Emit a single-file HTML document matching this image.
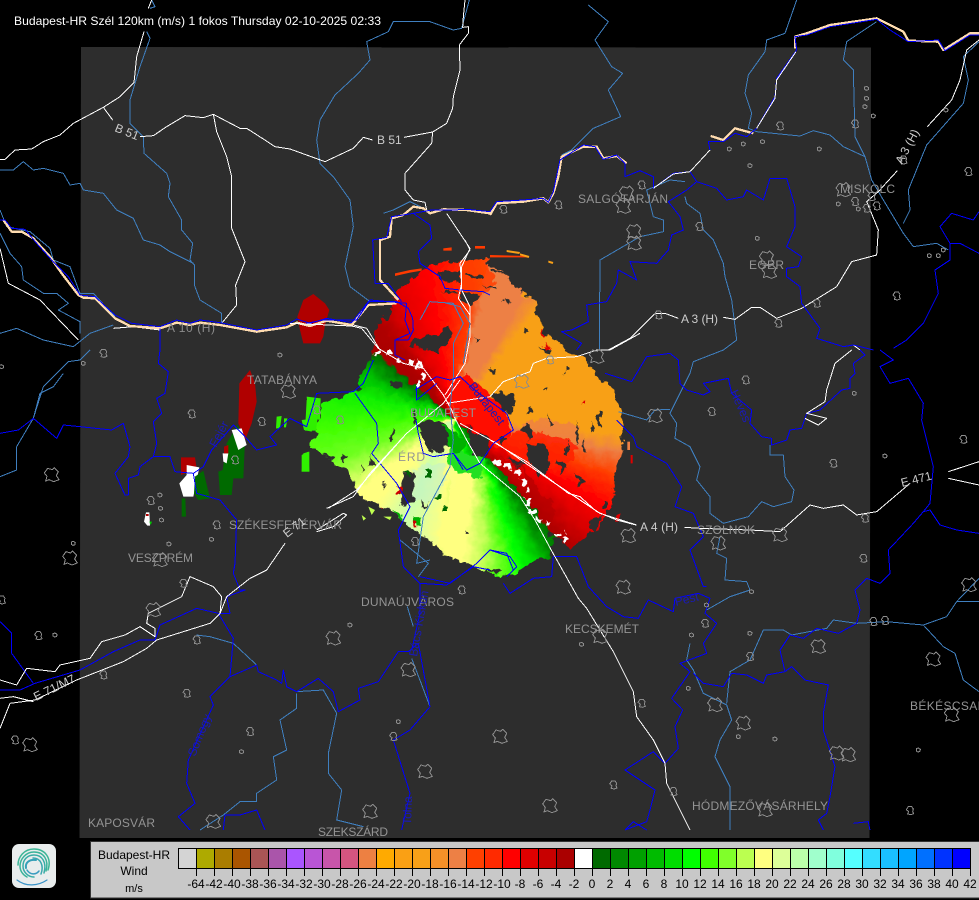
<!DOCTYPE html>
<html><head><meta charset="utf-8"><title>Budapest-HR</title>
<style>
html,body{margin:0;padding:0;background:#000;width:979px;height:900px;overflow:hidden}
#w{position:absolute;left:290px;top:240px;width:1050px;height:1050px;transform:scale(.33333);transform-origin:0 0;filter:url(#rough)}
#r{position:absolute;left:0;top:0;width:1050px;height:1050px;
clip-path:polygon(250px 340px,255px 270px,290px 230px,310px 180px,335px 140px,380px 110px,420px 75px,500px 65px,600px 55px,590px 80px,640px 95px,670px 130px,700px 160px,735px 190px,745px 235px,760px 280px,800px 300px,840px 340px,905px 370px,920px 410px,975px 450px,995px 530px,1000px 620px,990px 650px,975px 700px,970px 790px,930px 860px,880px 900px,840px 925px,810px 900px,785px 900px,785px 950px,740px 960px,680px 1000px,620px 1005px,580px 990px,530px 970px,480px 960px,400px 890px,350px 860px,330px 830px,260px 790px,220px 770px,190px 740px,180px 690px,130px 670px,110px 650px,60px 620px,75px 590px,100px 490px,200px 450px,215px 400px,240px 360px);
background:conic-gradient(from 0deg at 490px 530px,#ff2000 0deg,#ff3a00 8deg,#ed8045 14deg,#ed8045 30deg,#f8a018 38deg,#f8a018 96deg,#ed8045 102deg,#ff4000 110deg,#ff0000 120deg,#d80000 130deg,#a80000 139.5deg,#006a00 140deg,#008800 145deg,#00c000 153deg,#00f000 160deg,#60ff10 167deg,#bbff50 175deg,#ffff80 186deg,#ddffa0 197deg,#ccffaa 205deg,#ffff80 222deg,#ffff80 232deg,#bbff50 240deg,#70ff20 250deg,#40ff00 265deg,#10f000 282deg,#00c000 295deg,#007000 308deg,#a80000 310deg,#b00000 322deg,#e00000 335deg,#ff0000 350deg,#ff2000 360deg)}
#se{position:absolute;left:0;top:0;width:1050px;height:1050px;
clip-path:polygon(470px 640px,590px 645px,700px 770px,790px 880px,790px 960px,680px 1010px,480px 970px,440px 900px,480px 760px);
background:conic-gradient(from 0deg at 560px 600px,transparent 0deg,transparent 139.5deg,#006a00 140deg,#008800 146deg,#00c000 152deg,#00ff00 160deg,#50ff10 167deg,#bbff50 176deg,#ffff80 186deg,#ffff80 205deg,#eeffa0 260deg,transparent 260.5deg)}
svg{position:absolute;left:0;top:0}
text{font-family:"Liberation Sans",sans-serif}
.c{fill:#949494;font-size:12px}
.rd{fill:#ccc;font-size:12px}
.cn{fill:#1a1ab8;font-size:12px}
.l text{fill:#000;font-size:12px}
</style></head><body>
<svg width="979" height="900" viewBox="0 0 979 900">
<defs>
<filter id="rough" x="-5%" y="-5%" width="110%" height="110%"><feTurbulence type="fractalNoise" baseFrequency="0.035" numOctaves="3" seed="7" result="n"/><feDisplacementMap in="SourceGraphic" in2="n" scale="34" xChannelSelector="R" yChannelSelector="G"/></filter>
<path id="m" d="M-11,-3L-5,-12 5,-12 10,-5 8,2 11,9 2,12 -7,10 -4,3Z"/>
<path id="s" d="M-6,-4L0,-6 6,-2 5,4 -1,6 -6,3Z"/>
<path id="l" d="M-22,-6L-12,-20 2,-16 8,-22 20,-10 14,2 22,14 6,20 -8,14 -18,18 -14,4Z"/>
</defs>
<polygon points="81,47 871,47.5 869.5,838 79.5,838" fill="#2d2d2d"/>
</svg>
<div id="w"><div id="r"><div id="se"></div>
<svg width="1050" height="1050" viewBox="0 0 1050 1050">
<path fill="#ff4000" d="M510,65L600,55 590,90 620,130 570,170 520,170Z" opacity=".85"/>
<path fill="#ff1000" d="M480,430L530,400 590,460 640,500 665,570 640,625 560,570 500,540Z"/>
<path fill="#ff2000" d="M620,610L700,565 800,585 860,610 850,660 760,690 660,650Z" opacity=".85"/>
<path fill="#ed8045" d="M690,545L780,540 870,560 860,600 780,580 700,565Z" opacity=".8"/>
<path fill="#20e020" d="M480,625L590,650 570,720 500,690 470,660Z"/>
<path fill="#bff0d0" d="M375,680L465,665 470,720 420,790 365,780Z" opacity=".5"/>
<path fill="#2d2d2d" d="M420,290L480,265 490,300 440,335 400,330 360,310 380,290ZM510,150L570,170 540,200 510,175ZM440,95L510,95 510,125 455,120ZM530,100L580,108 575,116 530,110ZM600,90L650,100 650,108 600,98ZM380,550L440,540 470,560 482,620 440,640 408,610ZM530,560L600,600 590,640 550,650ZM640,450L680,480 670,520 640,520 610,470ZM700,545L730,570 720,600 690,570ZM710,610L770,620 780,680 750,720 715,660ZM830,600L840,650 825,650ZM860,540L870,600 860,610ZM925,510L935,510 930,560 920,560ZM940,780L955,780 950,810 935,810ZM345,700L375,700 370,790 340,800 325,750ZM310,565L318,570 305,600 298,595ZM305,425L335,425 335,437 305,437ZM600,380L620,395 610,405ZM550,290L565,300 560,312ZM700,270L712,270 712,280 700,280ZM750,320L790,330 780,345ZM820,380L840,390 825,400ZM720,510L730,525 710,520ZM590,990L640,985 620,1000ZM150,640L170,640 160,670ZM100,640L130,650 120,670ZM215,670L225,690 215,700ZM530,870L540,880 525,880ZM780,870L800,880 770,900ZM650,650L700,670 690,690ZM400,800L420,790 400,810ZM400,590L440,590 420,640ZM460,150L500,155 490,162ZM570,130L620,140 615,148ZM640,180L660,185 655,195ZM590,385L610,388 605,395ZM760,440L775,440 770,450ZM780,520L790,560 782,565ZM905,540L912,575 905,580ZM880,590L888,640 878,640ZM800,660L830,680 810,700ZM860,700L885,720 860,740ZM900,840L940,830 910,880ZM620,590L650,600 640,615ZM240,640L250,680 238,680ZM280,730L290,740 278,745ZM370,500L385,540 372,550ZM395,780L405,800 392,810Z"/>
<path fill="#ff3a00" d="M520,55L600,45 610,52 520,62ZM640,85L680,95 678,102 640,92Z"/>
<path fill="#f8a018" d="M700,160L720,165 720,175 700,172Z"/>
<path fill="#e00000" d="M750,265L770,275 755,285ZM765,310L790,325 775,330ZM820,285L840,295 830,305ZM880,480L890,490 880,500Z"/>
<path fill="#b00000" d="M620,650L700,690 720,790 760,850 830,915 790,870 790,800 740,740 700,680Z" opacity=".6"/>
<path fill="#006a00" d="M405,690L420,690 420,720 405,715ZM437,762L452,762 450,782 437,780ZM458,800L472,800 472,816 458,816ZM345,700L358,700 358,716 345,716Z"/>
<path fill="#00b000" d="M370,830L395,830 392,855 368,855ZM310,810L340,830 325,845ZM460,560L540,600 510,640 470,620Z"/>
<path fill="#c00" d="M320,735L332,735 332,755 320,755ZM265,795L285,800 275,810ZM370,845L382,848 378,862 368,860Z"/>
<g fill="none" stroke="#fff" stroke-width="12" stroke-dasharray="22 12">
<path d="M255,342L300,335 340,360 395,378 395,420 372,450"/>
<path d="M610,660L680,692 712,740 712,800 735,835 785,855"/>
<path d="M795,888L830,878M820,905L830,900"/>
</g>
</svg></div></div>
<svg width="979" height="900" viewBox="0 0 979 900">
<g transform="translate(290,240) scale(.33333)">
<path fill="#ff3a00" d="M600,45L715,48 715,52 600,52ZM460,25L485,22 485,32 460,32ZM555,18L585,18 585,26 555,26ZM315,100L360,90 395,85 395,92 360,98 315,108Z"/>
<path fill="#f8a018" d="M650,30L690,36 688,42 650,36ZM690,40L718,48 716,54 690,46ZM775,62L790,66 788,72 775,68Z"/>
<path fill="#e00000" d="M980,825L992,820 985,845 975,845ZM1022,645L1028,645 1028,670 1022,670Z"/>
<path fill="#ed8045" d="M1012,605L1020,605 1020,630 1012,630Z"/>
<path fill="#30f000" d="M50,480L90,478 78,572 45,572ZM40,640L58,635 58,695 35,695Z"/>
<path fill="#c0ff50" d="M235,800L255,810 245,825ZM280,830L305,830 300,840ZM215,825L228,835 220,842Z"/>
</g>
<g transform="translate(0,350) scale(.33333)">
<path fill="#b00000" d="M718,100L750,60 765,100 770,155 755,220 735,270 715,220Z"/>
<path fill="#006a00" d="M680,280L712,225 735,270 730,385 700,385 695,435 660,435 655,365 668,360Z"/>
<path fill="#fff" d="M695,240L725,235 740,285 715,300ZM668,310L685,310 680,340 670,335Z"/>
<path fill="#b00000" d="M672,290L685,285 685,310 672,310ZM543,322L585,322 590,355 543,375Z"/>
<path fill="#fff" d="M560,345L598,352 580,440 550,440 538,400 560,375Z"/>
<path fill="#006a00" d="M585,380L610,362 630,445 595,450 582,430ZM545,445L556,445 558,500 545,500Z"/>
<path fill="#fff" d="M438,487L448,487 450,527 442,527 432,515Z"/><path fill="#0c0" d="M448,515L456,515 452,525Z"/>
<path fill="#b00000" d="M438,492L446,492 446,498 438,498Z"/>
<path fill="#30f000" d="M830,200L845,198 840,235 828,235ZM852,205L862,205 858,232 852,232ZM905,210L945,205 935,245 912,240ZM920,140L962,145 960,210 940,205 925,190ZM905,315L925,305 928,365 905,365Z"/>
</g>
<g transform="scale(.33333)"><path fill="#b00000" d="M892,950L910,900 940,882 975,910 988,930 975,975 970,1010 960,1030 910,1030 900,990Z"/></g>

<g fill="none" stroke-linejoin="round" shape-rendering="crispEdges">
<!-- zoom 4: top-left -->
<g transform="scale(.33333)" stroke-width="3">
<g stroke="#3f7fbf">
<path d="M450,25L465,20 455,0M440,95L450,115 420,200 390,300 390,370 430,410 432,460 500,520 510,550 505,590 545,660 545,690 578,730 570,780 583,795 583,855 600,900 665,940 665,970"/>
<path d="M1408,0L1385,85 1360,90 1290,65 1180,65 1165,95 1100,125 1110,180 1075,220 1005,285 960,360 950,420 960,490 1000,530 1050,600 1060,680 1035,800 1050,860 1110,905"/>
<path d="M0,510L40,510 70,485 100,510 130,505 190,520 210,555 240,550 250,570 310,580 350,630 400,655 430,720 480,735 510,755 580,790"/>
<path d="M0,630L20,680 90,695 150,745 160,780 210,800 240,880 280,880 345,950"/>
<path d="M0,700L30,760 65,800 70,840 130,880 170,880 205,910 175,930 240,965 240,1000M0,1000L50,985 130,1020 220,1040 270,1000 340,975M1150,640L1180,630 1230,605 1290,635"/>
</g>
<g stroke="#fff">
<path d="M445,25L455,0M432,95L410,170 402,248 360,290 310,322 220,370 180,405 130,425 95,447 45,450 15,478 0,478M310,322L338,360"/>
<path d="M420,410L460,407 500,380 555,347 610,353 640,343 720,385 740,385 790,417 825,440 870,447 975,485 1060,445 1090,412 1118,420M1212,412L1298,396 1340,370 1358,325 1360,290 1380,210 1378,135 1405,100 1405,80 1388,82 1390,50 1395,0"/>
<path d="M640,343L650,395 680,470 695,530 695,685 735,785 707,855 710,915 665,970"/>
<path d="M1298,396L1295,430 1215,520 1215,570 1240,600 1275,607 1280,630M1340,640L1410,745 1385,800 1385,870 1410,920 1410,950"/>
<path d="M0,745L25,850 120,900 235,1020M340,985L400,980 480,990M1060,975L1100,985 1140,1050"/>
</g>
<path stroke="#ffdcb0" stroke-width="7" d="M10,660L35,695 65,695 100,715 150,770 185,820 235,885 250,893 285,895 345,955 390,978 480,985 530,968 570,975 600,968 660,975 770,995 860,982 890,968 930,978 980,962 1055,975 1105,915 1190,910M1195,900L1140,840 1140,720 1170,710 1175,655 1210,645 1240,620 1270,625 1290,640 1330,628 1400,630 1470,640"/>
<path stroke="#0000ff" d="M0,660L15,660 35,685 75,688 110,730 155,780 205,830 240,885 285,890 345,945 395,970 480,980 530,960 570,970 600,960 660,968 770,990 860,975 890,957 930,970 980,955 1055,968 1105,905 1190,905 1225,925 1238,955 1240,990 1225,1020 1185,1020 1185,1050M480,985V1050M1205,905L1165,850 1125,850 1118,720 1160,712 1175,650 1210,645 1240,640 1290,675 1295,715 1255,755 1260,790 1320,830 1335,865 1380,870 1450,875 1470,885M1240,640L1295,630 1360,630 1400,628 1470,635"/>
</g>
<!-- zoom 5: top-right -->
<g transform="translate(490,0) scale(.33333)" stroke-width="3">
<g stroke="#3f7fbf">
<path d="M295,15L355,65 315,120 365,200 398,220 355,270 392,350 310,385 245,450 215,465"/>
<path d="M920,0L885,100 830,120 825,155 775,225 765,280 785,340 775,385 800,395 930,408 970,392 1020,405 1060,440 1125,470 1145,540 1180,600 1240,700 1270,740 1340,730 1375,750"/>
<path d="M1240,670L1260,630 1255,570 1310,435 1420,310 1435,240 1420,170 1467,125M1160,65L1070,125 1060,180 1090,210 1095,410 1125,470"/>
<path d="M585,590L590,610 630,640 640,690 670,720 700,790 705,830 725,900 740,1020 700,1050M585,545L540,540 470,570 490,650 520,660 520,695 450,710 330,780 328,1050"/>
</g>
<g stroke="#fff">
<path d="M355,1050L420,1015 495,940 525,940 565,955M700,952L735,958 785,922 810,922 860,955 935,925 1040,860 1085,785 1160,765 1165,690 1130,605 1165,575 1222,512M1312,380L1385,300 1410,240 1430,150 1467,120M1090,1035L1110,1050"/>
</g>
<path stroke="#ffdcb0" stroke-width="7" d="M0,645L20,610 100,605 160,595 175,607 190,580 205,530 215,470 280,440 320,440 340,475 380,468 410,490M662,408L700,420 735,385 790,400M915,145L915,110 950,100 1020,75 1160,55 1240,95 1255,122 1345,125 1360,150 1440,100 1467,100"/>
<path stroke="#0000ff" d="M0,635L20,605 100,600 160,595 175,607 190,575 210,480 280,435 315,440 340,478 380,465 405,490 405,530 450,512 490,530 490,565 550,520 600,515 660,450 655,425 700,425 735,400 770,410 800,385 855,290 860,235 920,150 915,110 950,105 1020,80 1160,58 1200,90 1255,125 1345,120 1365,152 1440,105 1467,105"/>
<path stroke="#fff" d="M800,385L855,295 860,240 918,155M490,565L550,522 600,515 660,450"/>
<path stroke="#0000ff" d="M600,515L620,545 590,570 535,605 570,650 580,690 545,705 535,750 500,790 420,785 440,840 385,810 380,850 350,905 290,915 295,965 245,990 215,995 275,1030 260,1050M620,545L680,565 710,600 760,590 770,570 820,600 840,535 890,535 915,620 915,680 890,740 935,770 925,800 890,805 890,830 930,860 935,910 990,985 980,1015 1060,1040 1090,1035 1150,1050"/>
<path stroke="#0000ff" d="M1467,635L1450,660 1385,640 1350,680 1380,730 1380,780 1335,810 1345,880 1300,970 1250,1020 1210,1045M1380,730L1410,730 1467,760"/>
</g>
<!-- zoom 6: bottom-left -->
<g transform="translate(0,350) scale(.33333)" stroke-width="3">
<g stroke="#3f7fbf">
<path d="M270,0L240,30 205,35 130,110 100,205 50,290 50,360 0,380M190,70L160,110 120,130 100,205"/>
<path d="M590,855L630,860 700,880 770,945M890,1030V1075L840,1110 860,1200 820,1220 830,1290 770,1330 770,1355 720,1355 670,1395 600,1440"/>
<path d="M890,1025L970,1020 1010,1090 985,1210 985,1270 1025,1320 1010,1410 1090,1430M1200,570L1285,640 1255,680M1235,925L1290,1070M1222,770L1240,830"/>
</g>
<g stroke="#0000ff">
<path d="M480,0L475,40 505,65 495,130 470,145 485,190 460,215 470,280 460,320 420,350 415,375 385,385 385,435 375,435 345,370 385,320 390,290 370,220 335,240 240,230 190,225 170,265 100,205 55,240 0,250"/>
<path d="M460,320L510,320 525,365 580,370 610,350 635,300 700,225 735,260 770,300 830,285 810,260 870,205 920,230 950,130 1060,125 1090,100 1120,30"/>
<path d="M580,370L590,430 660,450 710,510 705,640 700,670 720,720 735,720 680,740 690,790 655,790 700,865 690,980 630,1040 640,1065 565,1230 560,1300 585,1360 535,1400 570,1440"/>
<path d="M655,790L590,775 480,825 465,870 420,870 340,905 240,960 105,1000 60,1020 0,1020"/>
<path d="M690,980L770,945 775,965 830,990 845,1000 850,960 860,1010 890,1025 955,985 1000,1025 1015,1085 1080,1050 1075,1015 1135,995 1195,905 1225,905"/>
<path d="M1225,905L1255,880 1290,1070 1230,1140 1180,1170 1230,1330 1205,1440M1195,540L1210,650 1260,700 1340,705 1420,650 1470,660M1260,700V790L1235,900M0,815L35,850 35,910 100,1000M670,1440L675,1395 720,1395 770,1380 795,1440"/>
<path d="M1065,130L1130,220 1135,280 1115,310 1190,400 1230,470 1205,520 1195,540"/>
</g>
<g stroke="#fff">
<path d="M855,580L800,660 750,685 680,740 660,790 630,820 470,870 440,895 370,935 230,990 105,1050 30,1060 0,1135M0,1045L40,1040 100,1055"/>
<path d="M0,990L50,1005 80,955 165,965 180,945 270,925 305,875 375,855 420,830 465,860 465,835 440,820 445,790 545,740 570,680 640,710 665,740 660,790"/>
<path d="M1220,250L1070,420 985,475M950,540L1030,490 1040,495 1000,530 950,545"/>
</g>
</g>
<!-- zoom 7: bottom-right -->
<g transform="translate(490,350) scale(.33333)" stroke-width="3">
<g stroke="#3f7fbf">
<path d="M700,0L610,35 600,70 540,190 560,220 555,265 600,290 630,350 620,390 660,440 660,490 700,520 775,500 815,455 850,470 905,455 912,420 885,380 880,315 840,315 840,285"/>
<path d="M385,185L470,210 495,180 540,178M690,560L680,610 710,625 705,690 770,695 780,720 720,740 650,780"/>
<path d="M600,880L590,930 610,960 640,1030 710,1065 725,1110 690,1170 675,1220 720,1310 720,1440"/>
<path d="M710,1060L720,965 780,930 820,840 880,840 905,855 1010,835 1030,810 1100,820 1190,815 1300,825 1360,890 1395,910 1420,990 1467,1025M1300,825L1370,800 1400,755 1467,755M1400,755L1467,685"/>
</g>
<g stroke="#0000ff">
<path d="M190,620L260,620 295,710 350,770 400,800 445,805 475,750 550,785 555,745 625,730 660,745 645,790 680,820 640,880 650,910 610,925 570,940 600,965 545,1045 578,1080 555,1130 565,1195 525,1240 490,1205 405,1260 495,1320 480,1380 470,1415 405,1440"/>
<path d="M345,70L425,95 470,20 540,10 565,30 570,100 590,120 640,135 660,125 640,100 715,85 725,130 785,180 780,220 815,260 845,265 845,285 890,270 900,240 935,235 950,190 990,180 1055,120 1080,115 1080,85 1095,70 1090,40 1125,15 1110,0"/>
<path d="M380,210L430,260 440,290 530,340 575,410 555,470 610,490 640,560 600,600 640,710 650,710M190,620L185,680 130,685 60,730 40,700M0,600L60,620 80,650 50,680"/>
<path d="M610,970L640,1000 700,1010 725,970 770,975 820,1000 830,975 885,965 905,950 945,990 1015,1005 1000,1090 1000,1140 1035,1250 1020,1340 1010,1390 985,1410 1000,1440"/>
<path d="M885,965L870,900 900,855 940,865 980,835 1045,850 1100,820 1110,780 1095,720 1130,685 1170,700 1200,670 1195,600 1270,520 1300,485 1320,480 1350,525 1400,540 1467,550M1300,485L1320,460 1330,350 1295,210 1300,160 1255,85 1200,100 1170,50 1210,30 1170,0M1090,1420L1135,1415 1140,1440M405,1440L430,1415 470,1440"/>
</g>
<g stroke="#fff">
<path d="M0,270L50,300 110,335 235,430 270,440 320,485 380,510 438,525M583,532L630,535 780,540 870,545 960,465 1000,475 1060,465 1100,495 1160,485 1260,400M1375,365L1467,335M1375,385L1467,405"/>
<path d="M195,620L265,745 290,775 370,905 430,1025 440,1100 490,1170 525,1240 530,1300 600,1440M1085,0L1035,40 1010,120 1005,155 950,190 1010,205 985,225 945,205"/>
</g>
</g>
<!-- radar-area roads, zoom3 -->
<g transform="translate(290,240) scale(.33333)" stroke-width="3" stroke="#fff">
<path d="M525,0L540,30 510,70 515,130 505,175 540,225 540,290 525,370 465,465M0,250L185,258 215,265 265,325 340,370 400,385 460,465 485,510 495,535 530,600 570,670 690,770 735,840 795,951"/>
<path d="M350,580L460,490 510,420M470,490L600,470 640,425 720,395 730,370 770,355 860,350 920,330 960,330 1050,280M510,550L620,610 780,720 840,760 930,820 1040,855M350,580L240,700 190,770 110,805"/>
</g>
<g transform="translate(290,240) scale(.33333)" stroke-width="3" stroke="#0000ff">
<path d="M315,300L360,280 345,240 350,190 240,180 200,240 100,240 50,250M315,300L315,345 345,360"/>
<path d="M375,450L440,410 480,420 510,410 560,455 650,520 670,570 610,610 570,670 530,690 490,640 430,650 400,640 385,580 378,540"/>
<path d="M380,440L380,480 440,430M520,690L490,640"/>
<path d="M390,1010L480,1030 560,970 600,930 650,940 670,990"/>
</g>
<g transform="translate(290,240) scale(.33333)" stroke-width="3" stroke="#3f7fbf">
<path d="M390,240L420,185 490,190 520,250 490,310 490,410 480,500 490,600 480,680 400,830 380,970 420,960"/>
<path d="M470,190L510,200 540,250 520,370"/>
</g>
<!-- cities -->
<g stroke="#8c8c8c" stroke-width="3">
<g transform="translate(490,0) scale(.33333)">
<use href="#m" x="205" y="615"/><use href="#m" x="40" y="628"/><use href="#l" x="410" y="580"/><use href="#l" x="400" y="620"/><use href="#m" x="455" y="555"/><use href="#l" x="432" y="695"/><use href="#l" x="432" y="730"/><use href="#m" x="870" y="378"/><use href="#s" x="760" y="432"/><use href="#s" x="818" y="425"/><use href="#s" x="718" y="447"/><use href="#s" x="780" y="497"/><use href="#s" x="988" y="447"/><use href="#m" x="1095" y="372"/><use href="#s" x="1130" y="265"/><use href="#s" x="1130" y="295"/><use href="#s" x="1125" y="320"/><use href="#s" x="1150" y="348"/><use href="#l" x="1060" y="570"/><use href="#m" x="1095" y="605"/><use href="#s" x="1105" y="627"/><use href="#m" x="1160" y="618"/><use href="#m" x="1130" y="625"/><use href="#m" x="1145" y="590"/><use href="#s" x="1045" y="612"/><use href="#m" x="628" y="680"/><use href="#s" x="802" y="715"/><use href="#l" x="830" y="775"/><use href="#l" x="838" y="815"/><use href="#m" x="505" y="945"/><use href="#m" x="865" y="970"/><use href="#m" x="980" y="910"/><use href="#m" x="1220" y="888"/><use href="#m" x="1435" y="515"/><use href="#s" x="1368" y="330"/><use href="#m" x="1240" y="480"/><use href="#s" x="1318" y="767"/><use href="#s" x="1345" y="767"/><use href="#s" x="1360" y="750"/>
</g>
<g transform="translate(0,350) scale(.33333)">
<use href="#l" x="155" y="375"/><use href="#m" x="575" y="192"/><use href="#m" x="785" y="215"/><use href="#l" x="865" y="125"/><use href="#m" x="1020" y="210"/><use href="#m" x="950" y="180"/><use href="#m" x="705" y="330"/><use href="#m" x="452" y="452"/><use href="#s" x="480" y="435"/><use href="#s" x="482" y="475"/><use href="#s" x="485" y="510"/><use href="#m" x="650" y="525"/><use href="#s" x="635" y="568"/><use href="#s" x="507" y="582"/><use href="#s" x="220" y="580"/><use href="#l" x="210" y="625"/><use href="#l" x="480" y="630"/><use href="#s" x="5" y="50"/><use href="#m" x="5" y="750"/><use href="#m" x="115" y="857"/><use href="#s" x="165" y="855"/><use href="#m" x="590" y="870"/><use href="#m" x="560" y="1030"/><use href="#m" x="750" y="1145"/><use href="#s" x="725" y="1205"/><use href="#l" x="1000" y="865"/><use href="#s" x="1050" y="825"/><use href="#m" x="1385" y="720"/><use href="#l" x="1225" y="960"/><use href="#m" x="1180" y="1160"/><use href="#s" x="1195" y="1115"/><use href="#l" x="1275" y="1265"/><use href="#l" x="1110" y="1385"/><use href="#l" x="640" y="1415"/><use href="#l" x="90" y="1185"/><use href="#m" x="45" y="1170"/><use href="#l" x="460" y="780"/><use href="#m" x="550" y="700"/><use href="#m" x="310" y="975"/><use href="#m" x="1245" y="575"/><use href="#s" x="840" y="15"/><use href="#m" x="310" y="10"/><use href="#s" x="250" y="40"/>
</g>
<g transform="translate(490,350) scale(.33333)">
<use href="#l" x="95" y="95"/><use href="#m" x="180" y="30"/><use href="#l" x="320" y="20"/><use href="#l" x="495" y="198"/><use href="#m" x="665" y="185"/><use href="#m" x="767" y="90"/><use href="#s" x="1093" y="130"/><use href="#m" x="1030" y="340"/><use href="#s" x="1185" y="318"/><use href="#m" x="1420" y="268"/><use href="#m" x="1125" y="505"/><use href="#m" x="1120" y="625"/><use href="#l" x="870" y="555"/><use href="#l" x="415" y="558"/><use href="#l" x="685" y="580"/><use href="#l" x="400" y="712"/><use href="#s" x="785" y="725"/><use href="#s" x="650" y="765"/><use href="#m" x="645" y="820"/><use href="#s" x="605" y="855"/><use href="#s" x="780" y="850"/><use href="#m" x="1150" y="815"/><use href="#m" x="1185" y="812"/><use href="#l" x="985" y="890"/><use href="#m" x="780" y="920"/><use href="#l" x="330" y="860"/><use href="#s" x="275" y="883"/><use href="#l" x="1330" y="928"/><use href="#l" x="675" y="1065"/><use href="#m" x="455" y="1060"/><use href="#s" x="595" y="1015"/><use href="#l" x="760" y="1120"/><use href="#s" x="745" y="1160"/><use href="#s" x="855" y="1167"/><use href="#l" x="1040" y="1210"/><use href="#l" x="1075" y="1215"/><use href="#l" x="30" y="1160"/><use href="#m" x="370" y="1305"/><use href="#m" x="550" y="1325"/><use href="#l" x="180" y="1368"/><use href="#l" x="825" y="1380"/><use href="#m" x="1260" y="1382"/><use href="#s" x="1285" y="1200"/><use href="#l" x="1385" y="1095"/><use href="#l" x="1437" y="705"/>
</g>
</g>
</g>
<!-- labels -->
<text x="14" y="25" fill="#fff" font-size="12" textLength="367" lengthAdjust="spacingAndGlyphs">Budapest-HR Szél 120km (m/s) 1 fokos Thursday 02-10-2025 02:33</text>
<g>
<text class="c" x="578" y="203" textLength="90">SALGÓTARJÁN</text>
<text class="c" x="840" y="193" textLength="55">MISKOLC</text>
<text class="c" x="749" y="269" textLength="35">EGER</text>
<text class="c" x="247" y="384" textLength="70">TATABÁNYA</text>
<text class="c" x="410" y="417" textLength="66">BUDAPEST</text>
<text class="c" x="398" y="461" textLength="27">ÉRD</text>
<text class="c" x="229" y="529" textLength="113">SZÉKESFEHÉRVÁR</text>
<text class="c" x="128" y="562" textLength="65">VESZPRÉM</text>
<text class="c" x="361" y="606" textLength="93">DUNAÚJVÁROS</text>
<text class="c" x="565" y="633" textLength="74">KECSKEMÉT</text>
<text class="c" x="697" y="534" textLength="58">SZOLNOK</text>
<text class="c" x="692" y="810" textLength="136">HÓDMEZŐVÁSÁRHELY</text>
<text class="c" x="910" y="710" textLength="84">BÉKÉSCSABA</text>
<text class="c" x="88" y="827" textLength="67">KAPOSVÁR</text>
<text class="c" x="318" y="836" textLength="70">SZEKSZÁRD</text>
<text class="rd" transform="translate(114,131) rotate(22)">B 51</text>
<text class="rd" x="377" y="144">B 51</text>
<text class="rd" x="167" y="332" textLength="48" style="fill:#8c8c8c">A 10 (H)</text>
<text class="rd" x="681" y="323" textLength="37">A 3 (H)</text>
<text class="rd" transform="translate(902,165) rotate(-62)">A 3 (H)</text>
<text class="rd" x="640" y="531" textLength="38">A 4 (H)</text>
<text class="rd" transform="translate(902,487) rotate(-14)">E 471</text>
<text class="rd" transform="translate(36,701) rotate(-26)">E 71/M7</text>
<text class="rd" transform="translate(287,538) rotate(-38)">E 71</text>
<text class="cn" transform="translate(468,386) rotate(52)">Budapest</text>
<text class="cn" transform="translate(216,448) rotate(-62)">Fejér</text>
<text class="cn" transform="translate(195,757) rotate(-68)">Somogy</text>
<text class="cn" transform="translate(411,825) rotate(-88)">Tolna</text>
<text class="cn" transform="translate(417,657) rotate(-80)">Bács-Kiskun</text>
<text class="cn" transform="translate(676,606) rotate(-14)">Pest</text>
<text class="cn" transform="translate(730,392) rotate(66)">Heves</text>
</g>
<!-- legend -->
<rect x="90.5" y="841.5" width="890" height="56.5" fill="#c8c8c8" stroke="#333" stroke-width="1"/>
<g shape-rendering="crispEdges" stroke="#000" stroke-width="1">
<rect x="178.5" y="848.5" width="18" height="20" fill="#d4d4d4"/><rect x="196.5" y="848.5" width="18" height="20" fill="#aeaa00"/><rect x="214.5" y="848.5" width="18" height="20" fill="#aa7d00"/><rect x="232.5" y="848.5" width="18" height="20" fill="#aa5500"/><rect x="250.5" y="848.5" width="18" height="20" fill="#aa5555"/><rect x="268.5" y="848.5" width="18" height="20" fill="#aa55aa"/><rect x="286.5" y="848.5" width="18" height="20" fill="#aa55ff"/><rect x="304.5" y="848.5" width="18" height="20" fill="#b955d5"/><rect x="322.5" y="848.5" width="18" height="20" fill="#c855aa"/><rect x="340.5" y="848.5" width="18" height="20" fill="#d45580"/><rect x="358.5" y="848.5" width="18" height="20" fill="#ed8042"/><rect x="376.5" y="848.5" width="18" height="20" fill="#ffaa00"/><rect x="394.5" y="848.5" width="18" height="20" fill="#faa014"/><rect x="412.5" y="848.5" width="18" height="20" fill="#f8a018"/><rect x="430.5" y="848.5" width="18" height="20" fill="#f59028"/><rect x="448.5" y="848.5" width="18" height="20" fill="#ed8045"/><rect x="466.5" y="848.5" width="18" height="20" fill="#ff4000"/><rect x="484.5" y="848.5" width="18" height="20" fill="#ff2a00"/><rect x="502.5" y="848.5" width="18" height="20" fill="#ff0000"/><rect x="520.5" y="848.5" width="18" height="20" fill="#e00000"/><rect x="538.5" y="848.5" width="18" height="20" fill="#c80000"/><rect x="556.5" y="848.5" width="18" height="20" fill="#aa0000"/><rect x="574.5" y="848.5" width="18" height="20" fill="#ffffff"/><rect x="592.5" y="848.5" width="18" height="20" fill="#006a00"/><rect x="610.5" y="848.5" width="18" height="20" fill="#008800"/><rect x="628.5" y="848.5" width="18" height="20" fill="#00a000"/><rect x="646.5" y="848.5" width="18" height="20" fill="#00bb00"/><rect x="664.5" y="848.5" width="18" height="20" fill="#00dd00"/><rect x="682.5" y="848.5" width="18" height="20" fill="#00ff00"/><rect x="700.5" y="848.5" width="18" height="20" fill="#40ff00"/><rect x="718.5" y="848.5" width="18" height="20" fill="#80ff2a"/><rect x="736.5" y="848.5" width="18" height="20" fill="#bbff50"/><rect x="754.5" y="848.5" width="18" height="20" fill="#ffff80"/><rect x="772.5" y="848.5" width="18" height="20" fill="#ddff99"/><rect x="790.5" y="848.5" width="18" height="20" fill="#bbffaa"/><rect x="808.5" y="848.5" width="18" height="20" fill="#a0ffcc"/><rect x="826.5" y="848.5" width="18" height="20" fill="#80ffdd"/><rect x="844.5" y="848.5" width="18" height="20" fill="#55ffff"/><rect x="862.5" y="848.5" width="18" height="20" fill="#33ddff"/><rect x="880.5" y="848.5" width="18" height="20" fill="#1ac0ff"/><rect x="898.5" y="848.5" width="18" height="20" fill="#00a5ff"/><rect x="916.5" y="848.5" width="18" height="20" fill="#0070ff"/><rect x="934.5" y="848.5" width="18" height="20" fill="#0033ff"/><rect x="952.5" y="848.5" width="18" height="20" fill="#0000ff"/>
<path d="M196.5,868v8M214.5,868v8M232.5,868v8M250.5,868v8M268.5,868v8M286.5,868v8M304.5,868v8M322.5,868v8M340.5,868v8M358.5,868v8M376.5,868v8M394.5,868v8M412.5,868v8M430.5,868v8M448.5,868v8M466.5,868v8M484.5,868v8M502.5,868v8M520.5,868v8M538.5,868v8M556.5,868v8M574.5,868v8M592.5,868v8M610.5,868v8M628.5,868v8M646.5,868v8M664.5,868v8M682.5,868v8M700.5,868v8M718.5,868v8M736.5,868v8M754.5,868v8M772.5,868v8M790.5,868v8M808.5,868v8M826.5,868v8M844.5,868v8M862.5,868v8M880.5,868v8M898.5,868v8M916.5,868v8M934.5,868v8M952.5,868v8M970.5,868v8"/>
</g>
<g class="l" text-anchor="middle">
<text x="134" y="859">Budapest-HR</text><text x="134" y="875">Wind</text><text x="134" y="892" style="font-size:11px">m/s</text>
<text x="196" y="888">-64</text><text x="214" y="888">-42</text><text x="232" y="888">-40</text><text x="250" y="888">-38</text><text x="268" y="888">-36</text><text x="286" y="888">-34</text><text x="304" y="888">-32</text><text x="322" y="888">-30</text><text x="340" y="888">-28</text><text x="358" y="888">-26</text><text x="376" y="888">-24</text><text x="394" y="888">-22</text><text x="412" y="888">-20</text><text x="430" y="888">-18</text><text x="448" y="888">-16</text><text x="466" y="888">-14</text><text x="484" y="888">-12</text><text x="502" y="888">-10</text><text x="520" y="888">-8</text><text x="538" y="888">-6</text><text x="556" y="888">-4</text><text x="574" y="888">-2</text><text x="592" y="888">0</text><text x="610" y="888">2</text><text x="628" y="888">4</text><text x="646" y="888">6</text><text x="664" y="888">8</text><text x="682" y="888">10</text><text x="700" y="888">12</text><text x="718" y="888">14</text><text x="736" y="888">16</text><text x="754" y="888">18</text><text x="772" y="888">20</text><text x="790" y="888">22</text><text x="808" y="888">24</text><text x="826" y="888">26</text><text x="844" y="888">28</text><text x="862" y="888">30</text><text x="880" y="888">32</text><text x="898" y="888">34</text><text x="916" y="888">36</text><text x="934" y="888">38</text><text x="952" y="888">40</text><text x="970" y="888">42</text>
</g>
<!-- logo -->
<rect x="12" y="844" width="44" height="44" rx="7" fill="#e9eded"/>
<g fill="none" stroke-linecap="round">
<path d="M48,870C52,858 45,849 34,849 24,849 18,857 18,865" stroke="#3cb596" stroke-width="1.5"/>
<path d="M46,871C49,860 44,852 34,852 26,852 20,859 20,866 20,871 23,875 27,877" stroke="#3ab39a" stroke-width="1.5"/>
<path d="M44,873C47,862 42,855 34,855 27,855 23,860 23,866 23,872 28,877 34,877" stroke="#39aca6" stroke-width="1.5"/>
<path d="M41,874C44,866 41,858 33,858" stroke="#3aa8ae" stroke-width="1.5"/>
<path d="M36,860C29,859 25,863 26,868" stroke="#35a0b8" stroke-width="2"/>
<path d="M27,870C30,875 36,875 39,871" stroke="#3a9cc0" stroke-width="1.5"/>
<path d="M17,880C26,887 38,886 47,880" stroke="#3a93c8" stroke-width="1.2"/>
</g>
</svg>
</body></html>
